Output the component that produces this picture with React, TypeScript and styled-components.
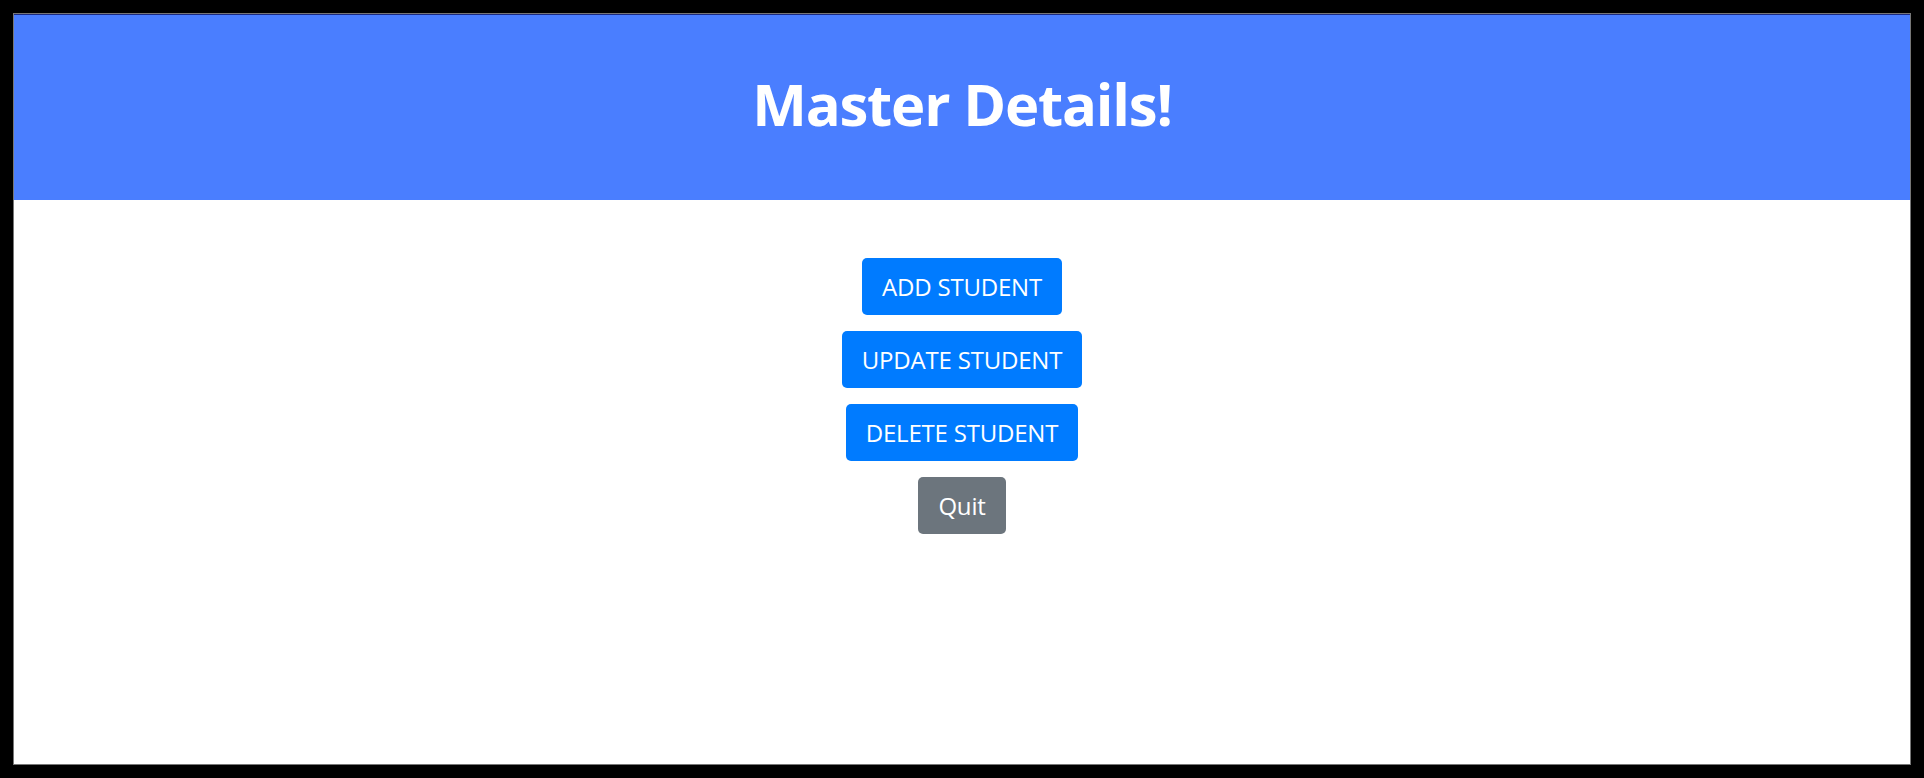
import React from "react";
import styled, { createGlobalStyle } from "styled-components";

const GlobalStyle = createGlobalStyle`
  html, body { margin: 0; padding: 0; background: #000; }
  body { font-family: "Open Sans", "Noto Sans", sans-serif; }
  * { box-sizing: border-box; }
`;

const Frame = styled.div`
  width: 1924px;
  height: 778px;
  padding: 13px;
  background: #000;
`;

const Screen = styled.div`
  width: 100%;
  height: 100%;
  background: #fff;
  display: flex;
  flex-direction: column;
  border: 1px solid #777;
`;

const Header = styled.header`
  height: 186px;
  background: #4a7eff;
  display: flex;
  align-items: flex-start;
  justify-content: center;
  border-top: 1px solid #1a2a80;
`;

const Title = styled.h1`
  margin: 0;
  margin-top: 48px;
  color: #fff;
  font-family: "Open Sans", "Noto Sans", sans-serif;
  font-weight: 700;
  font-size: 58px;
  line-height: 82px;
  letter-spacing: -1.2px;
`;

const Actions = styled.div`
  display: flex;
  flex-direction: column;
  align-items: center;
  gap: 16px;
  padding-top: 58px;
`;

const Button = styled.button<{ $variant?: "primary" | "secondary" }>`
  height: 57px;
  padding: 0 20px;
  border: none;
  border-radius: 5px;
  background: ${(p) => (p.$variant === "secondary" ? "#6c757d" : "#007bff")};
  color: #fff;
  font-family: "Open Sans", "Noto Sans", sans-serif;
  font-size: 24px;
  font-weight: 400;
  letter-spacing: -0.2px;
  cursor: pointer;
`;

export default function App() {
  return (
    <>
      <GlobalStyle />
      <Frame>
        <Screen>
          <Header>
            <Title>Master Details!</Title>
          </Header>
          <Actions>
            <Button>ADD STUDENT</Button>
            <Button>UPDATE STUDENT</Button>
            <Button>DELETE STUDENT</Button>
            <Button $variant="secondary">Quit</Button>
          </Actions>
        </Screen>
      </Frame>
    </>
  );
}
